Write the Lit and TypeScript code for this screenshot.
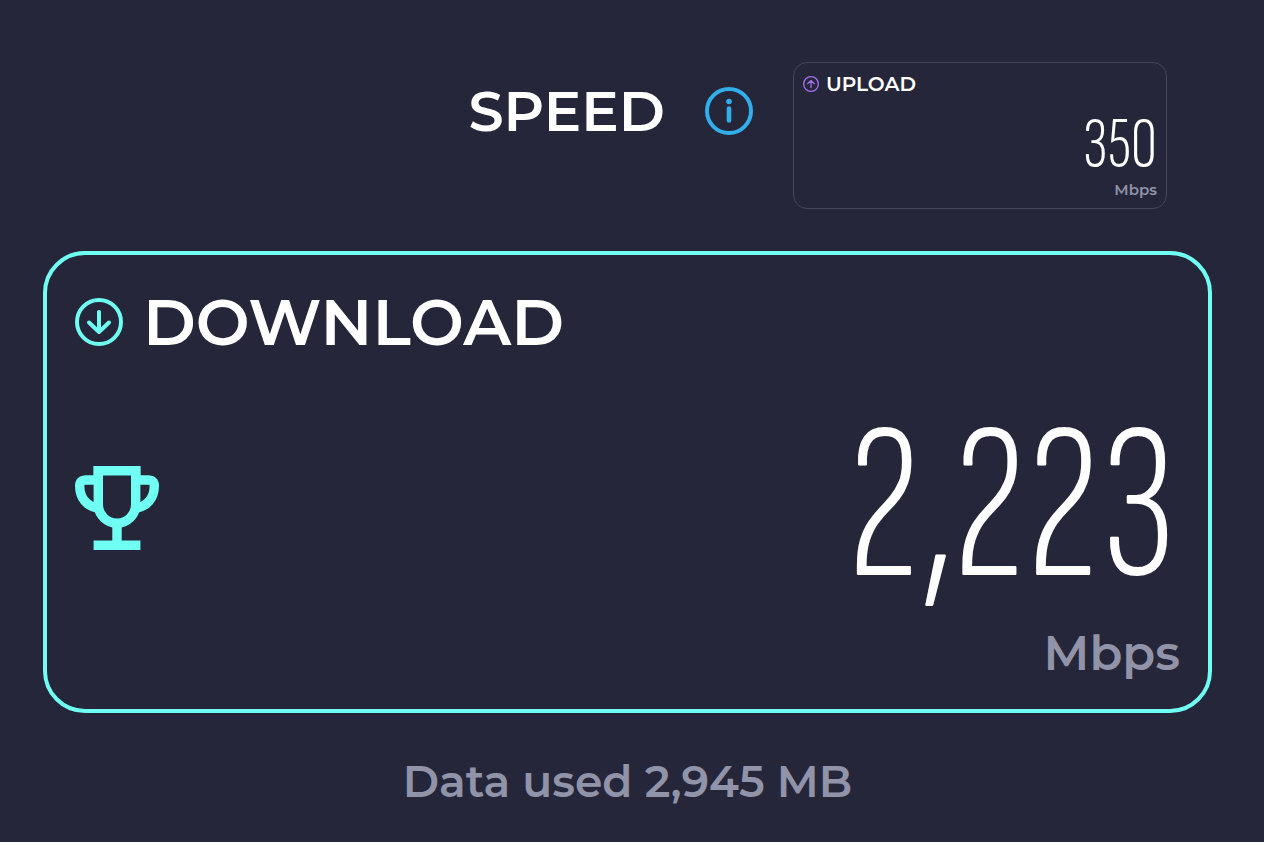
import { LitElement, html, css, svg } from "lit";
import { customElement, property } from "lit/decorators.js";

const arrow = (up: boolean) => html`<svg viewBox="0 0 48 48" fill="none" stroke="currentColor" stroke-linecap="round" stroke-linejoin="round" aria-hidden="true">
  <circle cx="24" cy="24" r="22" stroke-width="4"></circle>
  ${up
    ? svg`<path d="M24 35V14M14 23L24 13.5L34 23" stroke-width="4"></path>`
    : svg`<path d="M24 14V34M14 24.5L24 34L34 24.5" stroke-width="4"></path>`}
</svg>`;

@customElement("speed-card")
export class SpeedCard extends LitElement {
  @property() label = "";
  @property() value = "";
  @property() unit = "Mbps";
  @property({ type: Boolean, reflect: true }) up = false;
  @property({ type: Boolean, reflect: true }) best = false;

  static styles = css`
    :host {
      display: flex;
      flex-direction: column;
      box-sizing: border-box;
      border: 4px solid #6ffff3;
      border-radius: 42px;
      padding: 27px 28px 26px;
      color: #fff;
    }
    .title {
      display: flex;
      align-items: center;
      gap: 20px;
      margin: 0;
      font-size: 64px;
      line-height: 80px;
      font-weight: 600;
    }
    .title svg {
      width: 48px;
      height: 48px;
      color: #6ffff3;
    }
    .reading {
      display: flex;
      align-items: center;
      justify-content: space-between;
      margin-top: 48px;
      height: 196px;
    }
    .trophy {
      width: 84px;
      height: 84px;
      color: #6ffff3;
    }
    .value {
      margin-left: auto;
      padding-right: 4px;
      font-family: "Sofia Sans Extra Condensed", "Roboto Condensed", "Liberation Sans Narrow", sans-serif;
      font-size: 224px;
      line-height: 196px;
      font-weight: 300;
    }
    .unit {
      margin: 17px 0 0;
      text-align: right;
      font-size: 48px;
      line-height: 60px;
      font-weight: 600;
      color: #9193a8;
    }
    :host([up]) {
      border: 1px solid #45465a;
      border-radius: 14px;
      padding: 8px 9px 9px;
    }
    :host([up]) .title {
      gap: 7px;
      font-size: 20px;
      line-height: 26px;
    }
    :host([up]) .title svg {
      width: 16px;
      height: 16px;
      color: #a56df0;
    }
    :host([up]) .reading {
      height: 60px;
      margin-top: 18px;
    }
    :host([up]) .value {
      padding-right: 0;
      font-size: 74px;
      line-height: 60px;
    }
    :host([up]) .unit {
      margin-top: 6px;
      font-size: 15px;
      line-height: 18px;
    }
  `;

  render() {
    return html`
      <h2 class="title">${arrow(this.up)}<span>${this.label}</span></h2>
      <div class="reading">
        ${this.best
          ? html`<svg class="trophy" viewBox="0 0 84 84" fill="none" stroke="currentColor" stroke-width="9.4" role="img" aria-label="Best result">
              <path d="M23.3 4.7H60.7V38.5A18.7 18.7 0 0 1 23.3 38.5ZM42 56V79M18.6 79.3H65.4"></path>
              <path d="M18.6 0H28V9.4H18.6ZM56 0H65.4V9.4H56Z" fill="currentColor" stroke="none"></path>
              <path d="M23 14H11Q4.7 14 4.7 20C4.7 32 12 41 24 42M61 14H73Q79.3 14 79.3 20C79.3 32 72 41 60 42"></path>
            </svg>`
          : ""}
        <span class="value">${this.value}</span>
      </div>
      <p class="unit">${this.unit}</p>
    `;
  }
}

@customElement("app-root")
export class AppRoot extends LitElement {
  static styles = css`
    :host {
      display: block;
      box-sizing: border-box;
      min-height: 100vh;
      padding: 62px 52px 24px 43px;
      background: #25263a;
      color: #fff;
      font-family: "Montserrat", "Inter", sans-serif;
    }
    .top {
      display: flex;
      align-items: flex-start;
      justify-content: flex-end;
      gap: 40px;
      padding-right: 45px;
    }
    .heading {
      display: flex;
      align-items: center;
      gap: 40px;
      margin-top: 14px;
    }
    h1 {
      margin: 0;
      font-size: 56px;
      line-height: 70px;
      font-weight: 600;
    }
    .info {
      display: block;
      width: 48px;
      height: 48px;
      padding: 0;
      border: 0;
      background: none;
      color: #32aeea;
      cursor: pointer;
    }
    .info svg {
      display: block;
    }
    .upload {
      flex: 0 0 374px;
    }
    .download {
      margin-top: 42px;
    }
    .used {
      margin: 40px 0 0;
      text-align: center;
      font-size: 44px;
      line-height: 56px;
      font-weight: 600;
      color: #9193a8;
    }
  `;

  render() {
    return html`
      <main>
        <header class="top">
          <div class="heading">
            <h1>SPEED</h1>
            <button class="info" type="button" aria-label="About speed">
              <svg viewBox="0 0 48 48" width="48" height="48" fill="none" stroke="currentColor" stroke-width="4" stroke-linecap="round">
                <circle cx="24" cy="24" r="22"></circle>
                <path d="M24 21.5V33.5" stroke-width="4.6"></path>
                <circle cx="24" cy="14.5" r="2.8" fill="currentColor" stroke="none"></circle>
              </svg>
            </button>
          </div>
          <speed-card class="upload" up label="UPLOAD" value="350"></speed-card>
        </header>
        <speed-card class="download" best label="DOWNLOAD" value="2,223"></speed-card>
        <p class="used">Data used 2,945 MB</p>
      </main>
    `;
  }
}
